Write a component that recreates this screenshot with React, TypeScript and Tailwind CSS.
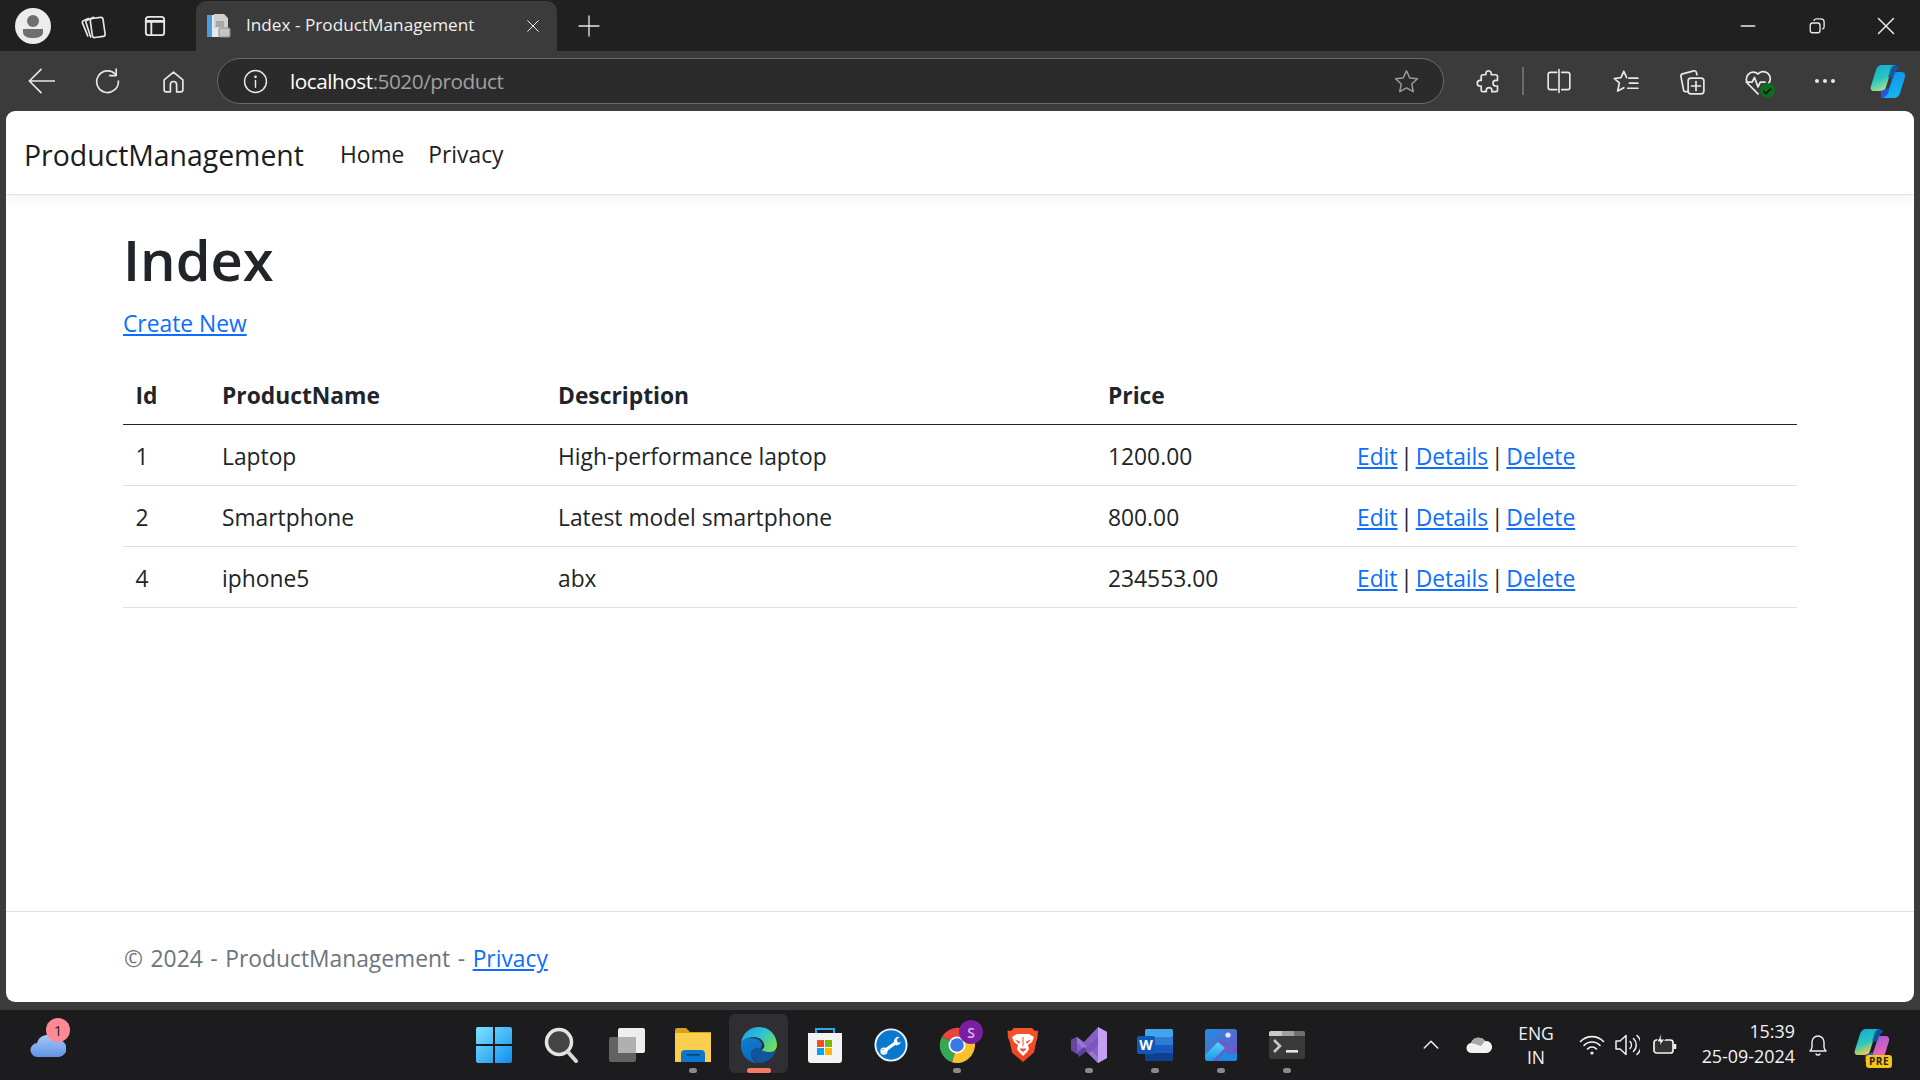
import React from "react";

const S = ({ children, w = 24, h = 24, vb = "0 0 24 24", stroke = "#e8e8e8", sw = 1.5 }: any) => (
  <svg width={w} height={h} viewBox={vb} fill="none" stroke={stroke} strokeWidth={sw} strokeLinecap="round" strokeLinejoin="round">
    {children}
  </svg>
);

const Slot = ({ children, w = "w-[66px]" }: any) => <div className={`${w} h-full flex items-center justify-center shrink-0`}>{children}</div>;

const Avatar = () => (
  <svg width="36" height="36" viewBox="0 0 36 36">
    <circle cx="18" cy="18" r="18" fill="#ececec" />
    <circle cx="18" cy="13" r="6" fill="#6f6f6f" />
    <path d="M8 21h20v3c0 4-4 6-10 6s-10-2-10-6z" fill="#6f6f6f" />
  </svg>
);

const TabFavicon = () => (
  <svg width="25" height="26" viewBox="0 0 25 26">
    <rect x="1" y="2" width="17" height="22" fill="#e8e8e8" />
    <rect x="1" y="2" width="5" height="22" fill="#4a9ee0" />
    <path d="M8 1h10l4 4v10H8z" fill="#cfcfcf" />
    <rect x="10" y="8" width="8" height="6" fill="#a8a8a8" />
    <rect x="13" y="15" width="11" height="9" rx="1" fill="#c4c4c4" stroke="#8c8c8c" />
  </svg>
);

const Edge = () => (
  <svg width="38" height="38" viewBox="0 0 38 38">
    <defs>
      <linearGradient id="e1" x1="0" y1="0" x2="1" y2="0.6"><stop offset="0" stopColor="#1b9de2" /><stop offset="0.55" stopColor="#2cc3d5" /><stop offset="1" stopColor="#6fdc5d" /></linearGradient>
      <linearGradient id="e2" x1="0" y1="0" x2="0.4" y2="1"><stop offset="0" stopColor="#0f7fd0" /><stop offset="1" stopColor="#0c67b8" /></linearGradient>
    </defs>
    <path d="M1 18C2 7 10 1 19 1c10 0 18 8 18 18 0 5-4 8-9 8-4 0-7-1-7-3 3-1 4-3 3-6-1-4-5-7-10-7C8 11 3 13 1 18z" fill="url(#e1)" />
    <path d="M1 18c2-5 7-7 13-6 5 1 8 4 8 7 0 2-1 3-2 4-4-2-9 0-9 5 0 3 2 7 7 9C8 37 0 29 1 18z" fill="url(#e2)" />
    <path d="M20 23c3 2 6 3 10 3 3 0 5-1 6-2-2 8-9 13-17 13-5-2-8-6-8-9 0-5 5-7 9-5z" fill="#12559c" />
  </svg>
);

const Chrome = () => (
  <svg width="36" height="36" viewBox="0 0 36 36">
    <path d="M18 18L3 9.5A18 18 0 0 1 33.6 9z" fill="#e8453c" />
    <path d="M18 18L3 9.5A18 18 0 0 0 13 35.3z" fill="#34a853" />
    <path d="M18 18L33.6 9A18 18 0 0 1 13 35.3z" fill="#fbc02d" />
    <circle cx="18" cy="18" r="8.5" fill="#fff" />
    <circle cx="18" cy="18" r="6.8" fill="#3b78e7" />
  </svg>
);

const Brave = () => (
  <svg width="32" height="36" viewBox="0 0 32 36">
    <defs><linearGradient id="b1" x1="0" y1="0" x2="0" y2="1"><stop offset="0" stopColor="#f1562b" /><stop offset="1" stopColor="#f2401f" /></linearGradient></defs>
    <path d="M7 1h18l3 3 3-.5-.5 7-1.500 5-2 10L16 35 5 25.500l-2-10-2-5-.5-7L4 4z" fill="url(#b1)" />
    <path d="M5 10l5-3h12l5 3-2 5-4 3 1 4-2 3-4 4-4-4-2-3 1-4-4-3z" fill="#fff" />
    <path d="M8 12.500l5 2-1 2.500zM24 12.500l-5 2 1 2.500z" fill="#f1502a" />
    <path d="M16 10v9M13 22h6l-3 2.500z" fill="#f1502a" stroke="#f1502a" strokeWidth="1" />
  </svg>
);

const VS = () => (
  <svg width="36" height="38" viewBox="0 0 36 38">
    <path d="M27 1l9 5v26l-9 5-14-14-7 5-6-4V14l6-3 7 5z" fill="#8661c5" />
    <path d="M27 1l9 5v26l-9 5z" fill="#c4a0f0" />
    <path d="M6 11l21 20v6l-14-14L6 17z" fill="#9a76d4" />
    <path d="M0 14l6-3v16l-6-3z" fill="#6a459f" />
    <path d="M13 23l14-12v8l-9 8z" fill="#7c56bb" />
    <path d="M6 27l7-6 3 4-8 6z" fill="#5e3f9c" />
  </svg>
);

const Word = () => (
  <svg width="36" height="32" viewBox="0 0 36 32">
    <rect x="8" y="0" width="28" height="32" rx="2" fill="#185abd" />
    <rect x="8" y="0" width="28" height="8" rx="2" fill="#41a5ee" />
    <rect x="8" y="8" width="28" height="8" fill="#2b7cd3" />
    <rect x="8" y="24" width="28" height="8" rx="2" fill="#103f91" />
    <rect x="0" y="7" width="18" height="18" rx="2" fill="#1157b8" />
    <text x="9" y="21" textAnchor="middle" fontSize="14" fontWeight="700" fontFamily="'Open Sans', sans-serif" fill="#fff">W</text>
  </svg>
);

const Photos = () => (
  <svg width="32" height="32" viewBox="0 0 32 32">
    <defs>
      <linearGradient id="p1" x1="0" y1="0" x2="1" y2="1"><stop offset="0" stopColor="#1f8fe0" /><stop offset="1" stopColor="#7a4fc0" /></linearGradient>
      <linearGradient id="p2" x1="0" y1="0" x2="0" y2="1"><stop offset="0" stopColor="#58d6f7" /><stop offset="1" stopColor="#1898e8" /></linearGradient>
    </defs>
    <rect width="32" height="32" rx="3" fill="url(#p1)" />
    <circle cx="23" cy="6" r="2.6" fill="#e6e6ff" />
    <path d="M0 26L16 10l16 14v5a3 3 0 0 1-3 3H3a3 3 0 0 1-3-3z" fill="#6a5cc9" />
    <path d="M0 26l13-13 7 6-13 13H3a3 3 0 0 1-3-3z" fill="url(#p2)" />
    <path d="M12 32l8-10 5 3 7-1v5a3 3 0 0 1-3 3z" fill="#1e88e5" />
  </svg>
);

const Terminal = () => (
  <svg width="36" height="28" viewBox="0 0 36 28">
    <rect width="36" height="28" rx="2" fill="#3a3a3a" />
    <path d="M0 2a2 2 0 0 1 2-2h11v5H0z" fill="#c8c8c8" />
    <rect x="13" width="12" height="5" fill="#a0a0a0" />
    <path d="M25 0h9a2 2 0 0 1 2 2v3H25z" fill="#707070" />
    <path d="M5 9l6 6-6 6" stroke="#c8c8c8" strokeWidth="2.6" fill="none" />
    <rect x="17" y="19" width="12" height="2.6" fill="#e6e6e6" />
  </svg>
);

const Store = () => (
  <svg width="36" height="36" viewBox="0 0 36 36">
    <path d="M9 8V2h18v6" fill="none" stroke="#29a9e8" strokeWidth="2" />
    <path d="M1 6h34v27a3 3 0 0 1-3 3H4a3 3 0 0 1-3-3z" fill="#f3f3f3" />
    <rect x="10" y="13" width="7" height="7" fill="#f25022" />
    <rect x="18" y="13" width="7" height="7" fill="#7fba00" />
    <rect x="10" y="21" width="7" height="7" fill="#00a4ef" />
    <rect x="18" y="21" width="7" height="7" fill="#ffb900" />
  </svg>
);

const Explorer = () => (
  <svg width="36" height="34" viewBox="0 0 36 34">
    <path d="M0 2a2 2 0 0 1 2-2h9l4 4h21v30H0z" fill="#d9a21c" />
    <path d="M0 5h36v29H0z" fill="#fbcf4e" />
    <path d="M6 34v-8a4 4 0 0 1 4-4h16a4 4 0 0 1 4 4v8z" fill="#0b78cf" />
    <rect x="11" y="26" width="14" height="1.6" fill="#073f73" />
  </svg>
);

const Wrench = () => (
  <svg width="34" height="34" viewBox="0 0 36 36">
    <circle cx="18" cy="18" r="16.500" fill="#0b78cf" stroke="#e8f2fb" strokeWidth="2" />
    <path d="M10 25l11-8" stroke="#fff" strokeWidth="3.400" strokeLinecap="round" />
    <circle cx="10.500" cy="24.500" r="3" fill="none" stroke="#fff" strokeWidth="1.600" />
    <path d="M21 14.500a5 5 0 0 1 6-5l-3 3 1.500 3 3-1a5 5 0 0 1-7.500 3z" fill="#fff" />
  </svg>
);

const Copilot = ({ pre }: { pre?: boolean }) => (
  <svg width="36" height="36" viewBox="0 0 36 36">
    <defs>
      <linearGradient id={pre ? "c1p" : "c1"} x1="0" y1="0" x2="0.4" y2="1"><stop offset="0" stopColor="#12a5d8" /><stop offset="0.6" stopColor="#2cc8c0" /><stop offset="1" stopColor={pre ? "#f5cf3f" : "#a5e08f"} /></linearGradient>
      <linearGradient id={pre ? "c2p" : "c2"} x1="0" y1="0" x2="0.3" y2="1"><stop offset="0" stopColor={pre ? "#a553e0" : "#0f8ee8"} /><stop offset="1" stopColor={pre ? "#f06bb0" : "#14b4f5"} /></linearGradient>
    </defs>
    <path d="M12 2h14c-3 1-4 3-5 6l-5 16c-1 3-3 4-6 4H4c-3 0-4-2-3-5L6 7c1-3 3-5 6-5z" fill={`url(#${pre ? "c1p" : "c1"})`} />
    <path d="M24 9h7c3 0 5 2 4 5l-5 16c-1 3-3 5-7 5H12c3-1 5-3 6-6l5-15z" fill={`url(#${pre ? "c2p" : "c2"})`} />
    <path d="M26 2c-3 0-5 1-6 5l-2 7 5 1 3-7c1-2 2-3 4-3z" fill="#0c5fb8" opacity="0.8" />
    <path d="M11 35c3 0 6-2 7-5l1-5-8 3z" fill="#2a57d8" />
  </svg>
);

const Pip = ({ color = "bg-[#8a8a8a]", w = "w-[8px]" }: any) => <div className={`absolute bottom-[7px] left-1/2 -translate-x-1/2 h-[5px] rounded-full ${w} ${color}`} />;

const Row = ({ id, name, desc, price }: any) => (
  <tr className="h-[61px] border-b border-[#dee2e6]">
    <td className="px-[12.5px] pt-[5px] align-middle">{id}</td>
    <td className="px-[12.5px] pt-[5px] align-middle">{name}</td>
    <td className="px-[12.5px] pt-[5px] align-middle">{desc}</td>
    <td className="px-[12.5px] pt-[5px] align-middle">{price}</td>
    <td className="px-[12.5px] pt-[5px] align-middle whitespace-nowrap [word-spacing:-3.1px]">
      <a className="text-[#0d6efd] underline">Edit</a> | <a className="text-[#0d6efd] underline">Details</a> | <a className="text-[#0d6efd] underline">Delete</a>
    </td>
  </tr>
);

const TaskIcon = ({ children, pip }: any) => (
  <div className="relative w-[66px] h-full flex items-center justify-center shrink-0">
    {children}
    {pip && <Pip />}
  </div>
);

export default function App() {
  return (
    <div className="w-[1920px] h-[1080px] flex flex-col bg-[#3b3b3b] overflow-hidden text-[22.8px] text-[#212529] font-['Open_Sans',sans-serif]">
      {/* Tab strip */}
      <div className="h-[51px] bg-[#202020] flex items-center shrink-0">
        <div className="w-[66px] flex justify-center"><Avatar /></div>
        <Slot w="w-[53px]">
          <S w={28} h={28} sw={1.400}>
            <path d="M7.500 20.500L3 9.500a1.500 1.500 0 0 1 .8-2L8 5.500" />
            <path d="M10 21.500L6 9a1.500 1.500 0 0 1 1-2l5.500-2.500" />
            <rect x="10.500" y="5" width="11" height="16.500" rx="2" transform="rotate(-8 16 13)" />
          </S>
        </Slot>
        <Slot w="w-[71px]">
          <S w={22} h={22} sw={2}>
            <rect x="2" y="2" width="20" height="20" rx="3" />
            <path d="M2.500 7h19" strokeWidth="3" />
            <path d="M8 8v13" />
          </S>
        </Slot>
        <div className="ml-[6px] w-[361px] self-end h-[50px] bg-[#3b3b3b] rounded-t-[10px] flex items-center pl-[10px] text-white">
          <div className="mb-[1px]"><TabFavicon /></div>
          <span className="ml-[15px] mb-[2px] text-[17.2px] text-[#f0f0f0] whitespace-nowrap">Index - ProductManagement</span>
          <div className="ml-auto mr-[16px]">
            <S w={16} h={16} sw={1.500} stroke="#f0f0f0"><path d="M4 4l16 16M20 4L4 20" /></S>
          </div>
        </div>
        <Slot w="w-[64px]"><S w={24} h={24} sw={1.300}><path d="M12 2v20M2 12h20" /></S></Slot>
        <div className="flex-1" />
        <Slot w="w-[69px]"><S w={18} h={18} sw={1.800}><path d="M3 12h18" /></S></Slot>
        <Slot w="w-[70px]">
          <S w={18} h={18} sw={1.800}>
            <rect x="3" y="8" width="13" height="13" rx="3" />
            <path d="M8 4.500c.5-1 1.500-2 3-2h6a4.500 4.500 0 0 1 4.500 4.500v6c0 1.500-1 2.500-2 3" />
          </S>
        </Slot>
        <Slot w="w-[68px]"><S w={20} h={20} sw={1.800}><path d="M3 3l18 18M21 3L3 21" /></S></Slot>
      </div>

      {/* Toolbar */}
      <div className="h-[60px] shrink-0 bg-[#3b3b3b] flex items-center pl-[8px]">
        <Slot><S w={28} h={28} sw={1.400}><path d="M2 12h23M12 2L2 12l10 10" /></S></Slot>
        <Slot><S w={26} h={26} sw={1.500}><path d="M20 6a10 10 0 1 0 2.500 6" /><path d="M20.500 1v6h-6" /></S></Slot>
        <Slot>
          <S w={25} h={25} sw={1.600}><path d="M3 10.500L12 3l9 7.500V20a2 2 0 0 1-2 2h-4v-7a3 3 0 0 0-6 0v7H5a2 2 0 0 1-2-2z" /></S>
        </Slot>
        <div className="ml-[11px] w-[1227px] h-[46px] rounded-full bg-[#2b2b2b] border border-[#6a6a6a] flex items-center shrink-0">
          <div className="ml-[25px]">
            <S w={25} h={25} sw={1.400}><circle cx="12" cy="12" r="10.500" /><path d="M12 11v6.500" /><circle cx="12" cy="7.500" r=".6" fill="#e8e8e8" /></S>
          </div>
          <span className="ml-[22px] mt-[1px] text-[20.800px] tracking-[-0.5px] text-white whitespace-nowrap">localhost<span className="text-[#a0a0a0]">:5020/product</span></span>
          <div className="ml-auto mr-[23px]">
            <S w={27} h={27} stroke="#9c9c9c" sw={1.300}><path d="M12 2.500l2.900 6.300 6.800.8-5 4.700 1.300 6.800-6-3.400-6 3.400 1.300-6.800-5-4.700 6.800-.8z" /></S>
          </div>
        </div>
        <div className="w-[11px] shrink-0" />
        <Slot>
          <S w={27} h={27} sw={1.500}><path d="M10 3.500a2.500 2.500 0 0 1 4.500 1.500v1h4a1.500 1.500 0 0 1 1.500 1.500v3.500h-1.500a2.500 2.500 0 0 0 0 5h1.500v3.500a1.500 1.500 0 0 1-1.500 1.500h-3.500v-1a2.500 2.500 0 0 0-5 0v1H7a1.500 1.500 0 0 1-1.500-1.500V16h-1a2.500 2.500 0 0 1 0-5h1V7.500A1.500 1.500 0 0 1 7 6h2.500z" /></S>
        </Slot>
        <div className="w-[2px] h-[28px] bg-[#6b6b6b] mx-[1px] shrink-0" />
        <Slot w="w-[67px]">
          <S w={26} h={26} sw={1.500}>
            <path d="M10 4H4a2 2 0 0 0-2 2v12a2 2 0 0 0 2 2h6M14.500 4H20a2 2 0 0 1 2 2v12a2 2 0 0 1-2 2h-5.500" />
            <path d="M12 1.500v21" />
          </S>
        </Slot>
        <Slot w="w-[67px]">
          <S w={27} h={27} sw={1.500}>
            <path d="M13 8.500L10.500 3 8 8.500 2 9.300l4.500 4L5 20.500l5.500-3" />
            <path d="M15 9h8M15.500 13.500H23M14 18h9" />
          </S>
        </Slot>
        <Slot w="w-[65px]">
          <S w={27} h={27} sw={1.500}>
            <path d="M9 21H6.500a1.500 1.500 0 0 1-1.500-1.200L2.600 7.500a2 2 0 0 1 1.400-2.300L14 2.500c1-.2 2 .3 2.300 1.300l.5 2.200" />
            <rect x="9" y="9" width="14" height="14" rx="2.500" />
            <path d="M16 12v8M12 16h8" />
          </S>
        </Slot>
        <Slot w="w-[67px]">
          <div className="relative w-[28px] h-[28px]">
            <S w={28} h={28} sw={1.500}>
              <path d="M12 23l-8-8a6 6 0 0 1 8-9 6 6 0 0 1 9 8" />
              <path d="M2 13h5l2-4 3 8 2-4h4" />
            </S>
            <div className="absolute right-[-3px] bottom-[-3px] w-[15px] h-[15px] rounded-full bg-[#0f6b1f] flex items-center justify-center">
              <svg width="10" height="10" viewBox="0 0 10 10" fill="none" stroke="#111" strokeWidth="1.600"><path d="M1.500 5l2.500 2.500 5-5" /></svg>
            </div>
          </div>
        </Slot>
        <Slot w="w-[67px]">
          <svg width="22" height="6" viewBox="0 0 22 6" fill="#e8e8e8"><circle cx="3" cy="3" r="2" /><circle cx="11" cy="3" r="2" /><circle cx="19" cy="3" r="2" /></svg>
        </Slot>
        <Slot w="w-[60px]"><Copilot /></Slot>
      </div>

      {/* Page */}
      <div className="mx-[6px] h-[891px] shrink-0 bg-white rounded-[9px] flex flex-col overflow-hidden">
        <nav className="h-[84px] shrink-0 border-b border-[#dee2e6] shadow-[0_5px_15px_rgba(0,0,0,0.05)] flex items-center pl-[18px] pt-[5px]">
          <span className="text-[28.4px] text-[#1a1d20]">ProductManagement</span>
          <span className="ml-[36px] text-[#1f2225]">Home</span>
          <span className="ml-[24px] text-[#1f2225]">Privacy</span>
        </nav>
        <main className="flex-1 px-[117px] pt-[34px]">
          <h1 className="text-[56px] leading-[60px] font-semibold">Index</h1>
          <p className="mt-[20px] leading-[30px]"><a className="text-[#0d6efd] underline">Create New</a></p>
          <table className="mt-[24px] w-full table-fixed border-collapse">
            <colgroup>
              <col className="w-[86.500px]" />
              <col className="w-[336px]" />
              <col className="w-[550px]" />
              <col className="w-[249px]" />
              <col />
            </colgroup>
            <thead>
              <tr className="h-[61px] border-b border-[#212529]">
                <th className="px-[12.5px] pt-[5px] text-left font-bold">Id</th>
                <th className="px-[12.5px] pt-[5px] text-left font-bold">ProductName</th>
                <th className="px-[12.5px] pt-[5px] text-left font-bold">Description</th>
                <th className="px-[12.5px] pt-[5px] text-left font-bold">Price</th>
                <th />
              </tr>
            </thead>
            <tbody>
              <Row id="1" name="Laptop" desc="High-performance laptop" price="1200.00" />
              <Row id="2" name="Smartphone" desc="Latest model smartphone" price="800.00" />
              <Row id="4" name="iphone5" desc="abx" price="234553.00" />
            </tbody>
          </table>
        </main>
        <footer className="h-[91px] shrink-0 border-t border-[#dee2e6] flex items-center pl-[118px] pt-[5px] text-[#6c757d]">
          <span className="[word-spacing:1.7px]">© 2024 - ProductManagement - <a className="text-[#0d6efd] underline">Privacy</a></span>
        </footer>
      </div>

      {/* Taskbar */}
      <div className="mt-[8px] flex-1 bg-[#1c1c1f] flex items-center relative">
        <div className="w-[462px] h-full shrink-0 flex items-center pl-[30px]">
          <div className="relative">
            <svg width="36" height="24" viewBox="0 0 36 24">
              <defs><linearGradient id="w1" x1="0" y1="0" x2="0" y2="1"><stop offset="0" stopColor="#a9c8f7" /><stop offset="1" stopColor="#5f93e6" /></linearGradient></defs>
              <path d="M8 24a7 7 0 0 1-1-14 11 11 0 0 1 20-3 8 8 0 0 1 2 17z" fill="url(#w1)" />
            </svg>
            <div className="absolute right-[-4px] top-[-15px] w-[24px] h-[24px] rounded-full bg-[#ff8a96] flex items-center justify-center text-[15px] text-[#222]">1</div>
          </div>
        </div>
        <TaskIcon>
          <svg className="mr-[3px]" width="36" height="36" viewBox="0 0 36 36">
            <defs><linearGradient id="wg" x1="0" y1="0" x2="1" y2="1"><stop offset="0" stopColor="#7fe3ff" /><stop offset="1" stopColor="#0f8fef" /></linearGradient></defs>
            <path d="M0 2a2 2 0 0 1 2-2h15v17H0zM19 0h15a2 2 0 0 1 2 2v15H19zM0 19h17v17H2a2 2 0 0 1-2-2zM19 19h17v15a2 2 0 0 1-2 2H19z" fill="url(#wg)" />
          </svg>
        </TaskIcon>
        <TaskIcon>
          <svg width="34" height="36" viewBox="0 0 34 36" fill="none">
            <circle cx="15" cy="15" r="12.500" fill="#444" stroke="#e4e4e4" strokeWidth="3.500" />
            <path d="M24 25l8 9" stroke="#d8d8d8" strokeWidth="4" strokeLinecap="round" />
          </svg>
        </TaskIcon>
        <TaskIcon>
          <svg width="36" height="34" viewBox="0 0 36 34">
            <rect x="9" y="0" width="27" height="25" rx="2" fill="#eeeeee" />
            <rect x="0" y="9" width="27" height="25" rx="2" fill="#6e6e6e" opacity="0.85" />
            <rect x="9" y="9" width="18" height="16" fill="#b0b0b0" />
          </svg>
        </TaskIcon>
        <TaskIcon pip><Explorer /></TaskIcon>
        <div className="relative w-[66px] h-full shrink-0 flex items-center justify-center">
          <div className="absolute left-[3px] right-[4px] top-[4px] bottom-[7px] rounded-[6px] bg-[#2e2e33]" />
          <div className="relative"><Edge /></div>
          <Pip color="bg-[#f47b68]" w="w-[24px]" />
        </div>
        <TaskIcon><Store /></TaskIcon>
        <TaskIcon><Wrench /></TaskIcon>
        <TaskIcon pip>
          <div className="relative">
            <Chrome />
            <div className="absolute right-[-8px] top-[-7px] w-[24px] h-[24px] rounded-full bg-[#7b1fa2] flex items-center justify-center text-[14px] font-semibold text-[#d9b9ea]">S</div>
          </div>
        </TaskIcon>
        <TaskIcon><Brave /></TaskIcon>
        <TaskIcon pip><VS /></TaskIcon>
        <TaskIcon pip><Word /></TaskIcon>
        <TaskIcon pip><Photos /></TaskIcon>
        <TaskIcon pip><Terminal /></TaskIcon>
        <div className="flex-1" />
        <div className="h-full flex items-center text-[#f2f2f2] shrink-0">
          <S w={18} h={18} sw={2} stroke="#f2f2f2"><path d="M3 16l9-9 9 9" /></S>
          <svg className="ml-[26px]" width="26" height="18" viewBox="0 0 26 18">
            <path d="M6 17a5 5 0 0 1-1-10 8 8 0 0 1 14-2 6 6 0 0 1 2 12z" fill="#f2f2f2" />
            <path d="M5 7a8 8 0 0 1 14-2l-4 5-6-2z" fill="#a8a8a8" />
          </svg>
          <div className="ml-[19px] w-[50px] text-center text-[17.5px] leading-[24px]">ENG<br />IN</div>
          <svg className="ml-[18px]" width="26" height="22" viewBox="0 0 26 22" fill="none" stroke="#f2f2f2" strokeWidth="1.600" strokeLinecap="round">
            <path d="M1.500 7.500a16 16 0 0 1 23 0M5 11.500a11 11 0 0 1 16 0M8.500 15a6 6 0 0 1 9 0" />
            <circle cx="13" cy="19" r="1.600" fill="#f2f2f2" stroke="none" />
          </svg>
          <svg className="ml-[9px]" width="26" height="24" viewBox="0 0 26 24" fill="none" stroke="#f2f2f2" strokeWidth="1.500" strokeLinecap="round" strokeLinejoin="round">
            <path d="M2 8h4l6-5.500v19L6 16H2z" />
            <path d="M16 8.500a5 5 0 0 1 0 7M19.500 5.500a9 9 0 0 1 0 13M23 2.500a13 13 0 0 1 0 19" />
          </svg>
          <svg className="ml-[12px]" width="26" height="24" viewBox="0 0 26 24" fill="none" stroke="#f2f2f2" strokeWidth="1.700" strokeLinejoin="round">
            <rect x="2" y="7" width="19" height="13" rx="2.500" fill="#333" />
            <path d="M23 11v5" strokeWidth="2.500" />
            <path d="M9 1L5 9h3l-1 5 6-8H9l1-5z" fill="#f2f2f2" stroke="#1c1c1f" strokeWidth="1" />
          </svg>
          <div className="ml-[5px] mb-[2px] w-[112px] text-right text-[17.9px] leading-[25px]">15:39<br />25-09-2024</div>
          <div className="ml-[11px]"><S w={24} h={24} sw={1.400} stroke="#f2f2f2"><path d="M4 18c1-1 2-2 2-4V9a6 6 0 0 1 12 0v5c0 2 1 3 2 4z" /><path d="M10 21a2.500 2.500 0 0 0 4 0" /></S></div>
          <div className="relative ml-[24px] mr-[30px]">
            <Copilot pre />
            <div className="absolute right-[-2px] bottom-[-5px] px-[3px] rounded-[3px] bg-[#f5c518] text-[#222] text-[10px] leading-[13px] font-bold tracking-[0.5px]">PRE</div>
          </div>
        </div>
      </div>
    </div>
  );
}
